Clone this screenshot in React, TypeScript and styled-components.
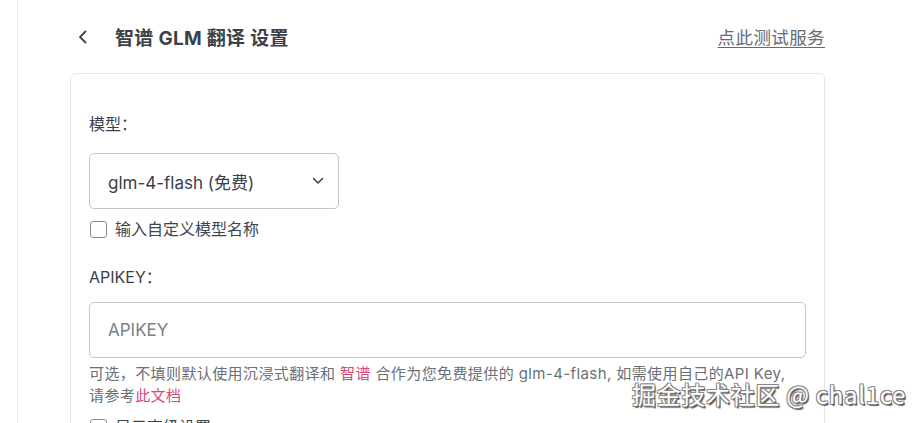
import React from "react";
import styled, { createGlobalStyle } from "styled-components";

const GlobalStyle = createGlobalStyle`
  html, body {
    margin: 0;
    padding: 0;
    background: #ffffff;
  }
  body {
    font-family: "Inter", "Noto Sans CJK SC", sans-serif;
    color: #373c44;
    overflow: hidden;
  }
`;

const Page = styled.div`
  display: flex;
  height: 423px;
  width: 923px;
  position: relative;
  overflow: hidden;
`;

const Sidebar = styled.div`
  width: 17px;
  border-right: 1px solid #eeeeee;
  flex-shrink: 0;
`;

const Main = styled.div`
  width: 755px;
  padding: 0 0 0 52px;
  display: flex;
  flex-direction: column;
`;

const Header = styled.div`
  display: flex;
  align-items: center;
  justify-content: space-between;
  height: 73px;
  flex-shrink: 0;
  box-sizing: border-box;
`;

const TitleGroup = styled.div`
  display: flex;
  align-items: center;
  gap: 25px;
  padding-left: 6px;
`;

const Back = styled.button`
  border: none;
  background: none;
  padding: 0;
  display: flex;
  color: #3f4450;
  cursor: pointer;
`;

const Title = styled.h1`
  margin: 0;
  font-size: 19px;
  font-weight: 700;
  color: #3b4049;
  letter-spacing: 0.3px;
`;

const TestLink = styled.a`
  font-size: 17.5px;
  color: #666b73;
  text-decoration: underline;
  text-underline-offset: 3px;
  letter-spacing: 0.4px;
`;

const Card = styled.div`
  border: 1px solid #e8e8e8;
  border-radius: 6px;
  padding: 38px 18px 0 18px;
  height: 400px;
  flex-shrink: 0;
  box-sizing: border-box;
`;

const Label = styled.div<{ $space?: number }>`
  font-size: 16px;
  color: #3b4049;
  line-height: 24px;
  margin-bottom: ${(p) => p.$space ?? 17}px;
`;

const Field = styled.div<{ $width?: string }>`
  width: ${(p) => p.$width || "100%"};
  height: 56px;
  box-sizing: border-box;
  border: 1px solid #c4c6ca;
  border-radius: 5px;
  display: flex;
  align-items: center;
  justify-content: space-between;
  padding: 0 14px 0 18px;
  font-size: 17px;
`;

const FieldText = styled.span<{ $placeholder?: boolean }>`
  color: ${(p) => (p.$placeholder ? "#7b7f86" : "#3b4049")};
`;

const CheckRow = styled.label`
  display: flex;
  align-items: center;
  gap: 8px;
  font-size: 16px;
  color: #40454d;
  margin-top: 10px;
  line-height: 20px;
`;

const Box = styled.span`
  width: 17px;
  height: 17px;
  border: 1.5px solid #8a8d92;
  border-radius: 3px;
  box-sizing: border-box;
  display: inline-block;
  margin-left: 1px;
`;

const Section = styled.div<{ $gap: number }>`
  margin-top: ${(p) => p.$gap}px;
`;

const Help = styled.p`
  margin: 5px 0 0;
  font-size: 15px;
  line-height: 22px;
  color: #6b6f76;
  letter-spacing: 0.4px;
`;

const Pink = styled.a`
  color: #d9477a;
  text-decoration: none;
`;

const Watermark = styled.div`
  position: absolute;
  left: 632px;
  top: 376px;
  font-size: 24px;
  font-family: "Noto Sans CJK SC", sans-serif;
  color: #ffffff;
  letter-spacing: 0.7px;
  text-shadow: -1px -1px 0 #888, 1px -1px 0 #888, -1px 1px 0 #888, 1px 1px 0 #555,
    1.5px 1.5px 1px #666;
  white-space: nowrap;
`;

export default function App() {
  return (
    <>
      <GlobalStyle />
      <Page>
        <Sidebar />
        <Main>
          <Header>
            <TitleGroup>
              <Back aria-label="back">
                <svg width="14" height="16" viewBox="0 0 14 16" fill="none">
                  <path d="M9.5 2.5 L4 8 L9.5 13.5" stroke="currentColor" strokeWidth="1.8" strokeLinecap="round" strokeLinejoin="round" />
                </svg>
              </Back>
              <Title>智谱 GLM 翻译 设置</Title>
            </TitleGroup>
            <TestLink href="#">点此测试服务</TestLink>
          </Header>
          <Card>
            <Label>模型：</Label>
            <Field $width="250px">
              <FieldText>glm-4-flash (免费)</FieldText>
              <svg width="12" height="8" viewBox="0 0 12 8" fill="none">
                <path d="M1.5 1.5 L6 6 L10.5 1.5" stroke="#3b4049" strokeWidth="1.6" strokeLinecap="round" strokeLinejoin="round" />
              </svg>
            </Field>
            <CheckRow>
              <Box />
              输入自定义模型名称
            </CheckRow>
            <Section $gap={26}>
              <Label $space={13}>APIKEY：</Label>
              <Field>
                <FieldText $placeholder>APIKEY</FieldText>
              </Field>
              <Help>
                可选，不填则默认使用沉浸式翻译和 <Pink href="#">智谱</Pink> 合作为您免费提供的 glm-4-flash, 如需使用自己的API Key,
                <br />
                请参考<Pink href="#">此文档</Pink>
              </Help>
              <CheckRow>
                <Box />
                显示高级设置
              </CheckRow>
            </Section>
          </Card>
        </Main>
        <Watermark>掘金技术社区 @ chal1ce</Watermark>
      </Page>
    </>
  );
}
